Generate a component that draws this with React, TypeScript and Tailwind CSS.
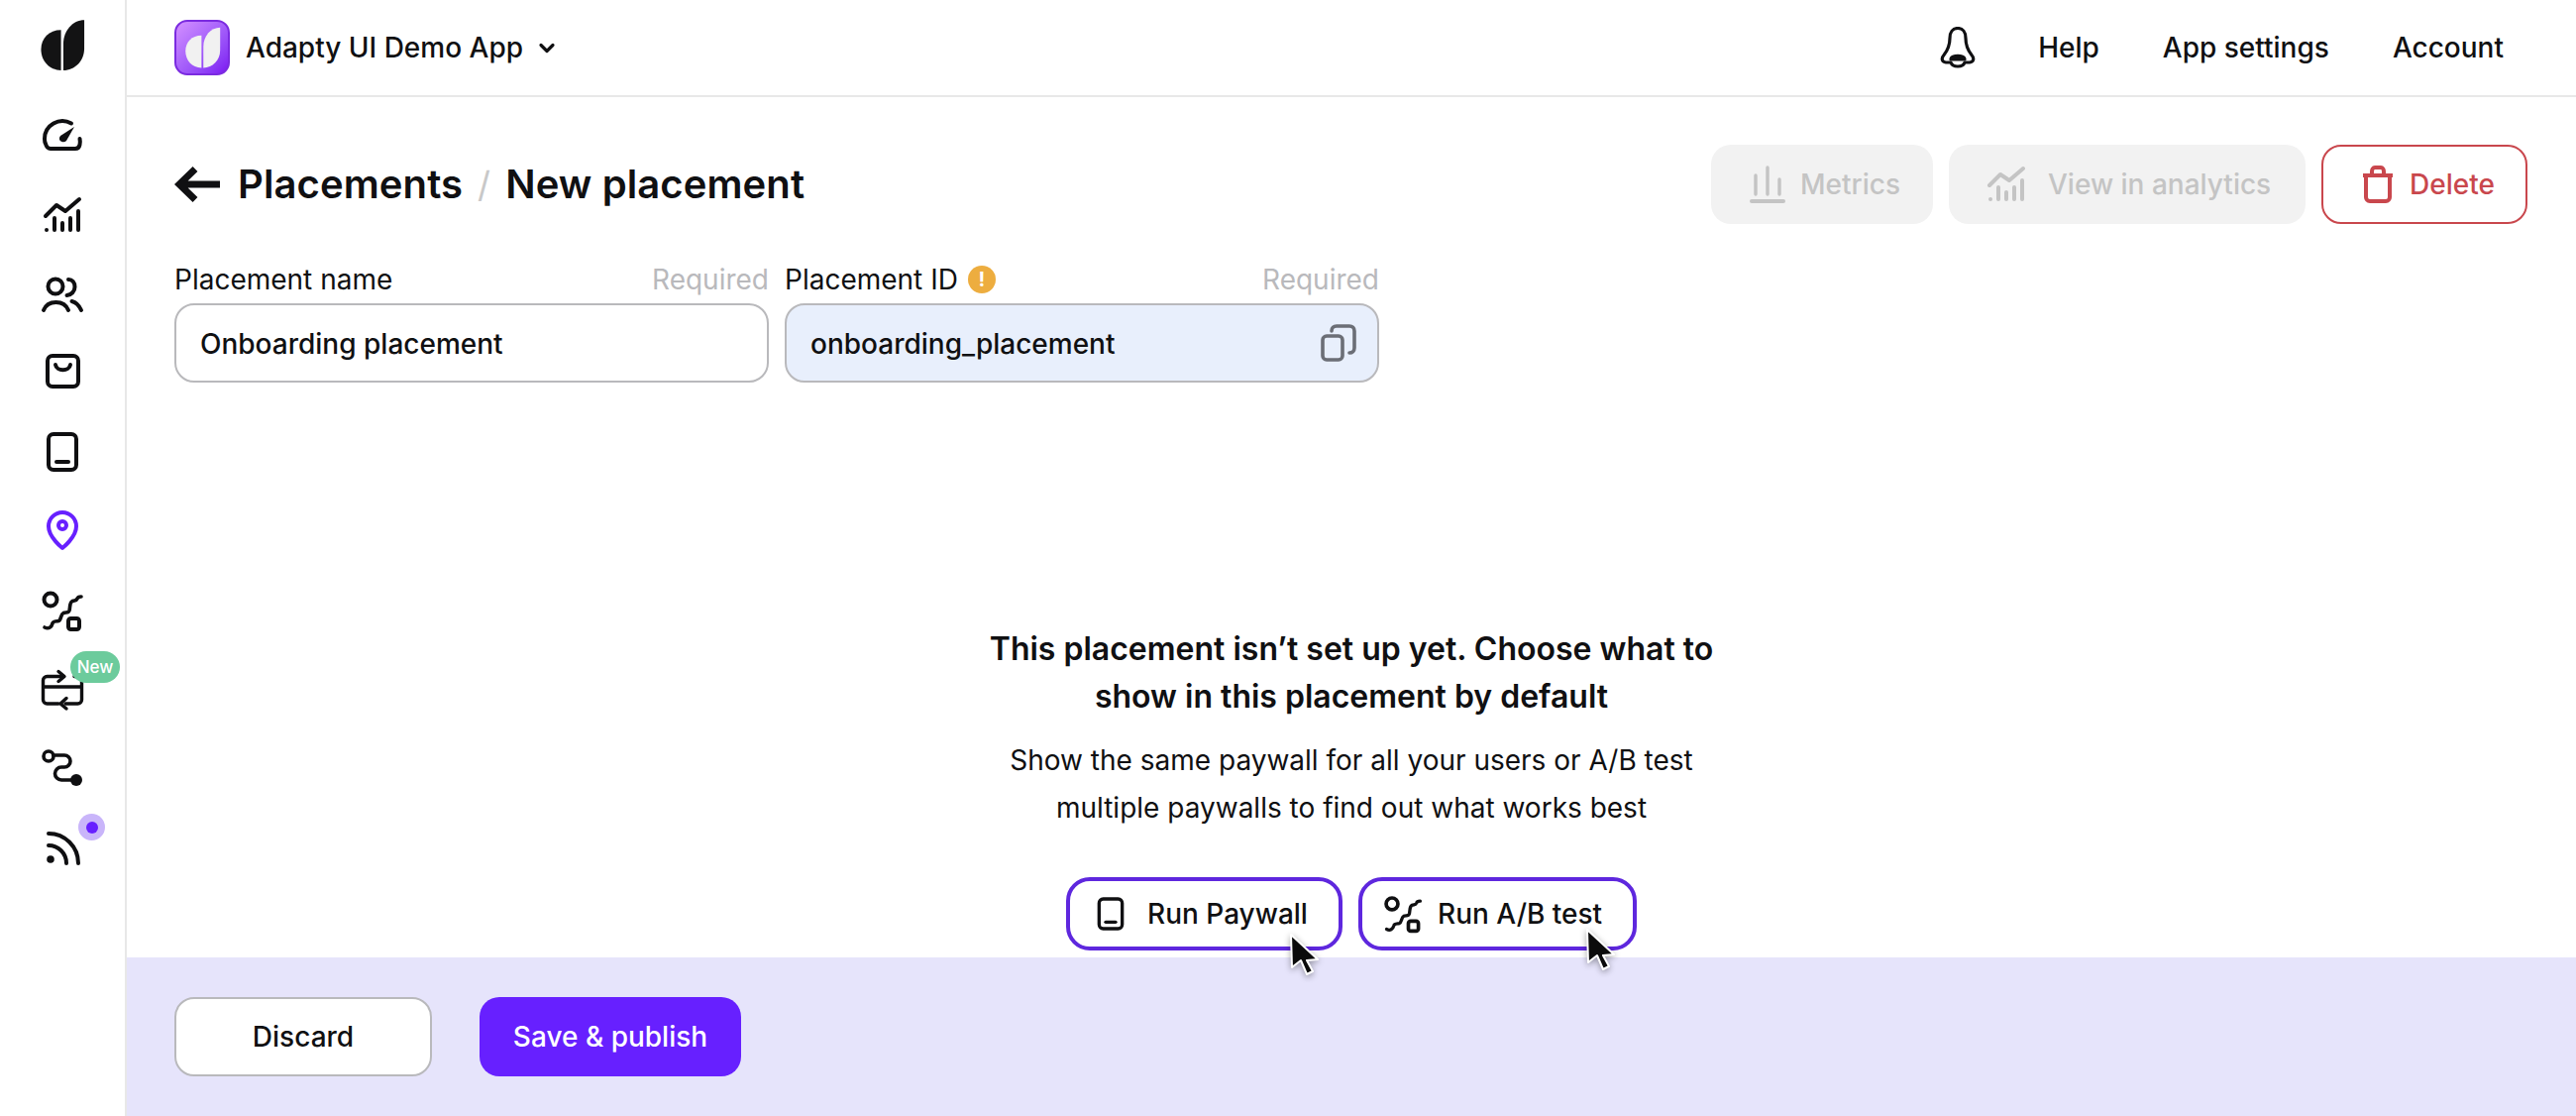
import React from "react";

const Ic = ({ children, className = "w-12 h-12" }: { children: React.ReactNode; className?: string }) => (
  <svg viewBox="0 0 48 48" className={`block ${className}`} fill="none" stroke="currentColor" strokeWidth={4} strokeLinecap="round" strokeLinejoin="round">
    {children}
  </svg>
);

const AB = ({ className = "w-12 h-12" }: { className?: string }) => (
  <Ic className={className}>
    <circle cx="12" cy="13" r="6.5" />
    <rect x="30" y="32" width="11" height="11" rx="2.5" />
    <path d="M6 41C10 43 13 41 14 37C14.500 34.500 18 35 20 34.500C23 33.500 22 28 25 26.500C27.500 25.500 30 27 31 24C32 20 31 16 34 14.500C36.500 13.500 38 14.500 39 12C39.500 10 41 10 43 10" strokeWidth={3.6} />
  </Ic>
);

const Phone = ({ className = "w-12 h-12" }: { className?: string }) => (
  <Ic className={className}>
    <rect x="10" y="6" width="28" height="36" rx="5" />
    <path d="M18 34h12" />
  </Ic>
);

const Chart = ({ className = "w-12 h-12" }: { className?: string }) => (
  <Ic className={className}>
    <path d="M7 25 18 14l9 6L41 8" />
    <path d="M8 39h.01M16 27v12M24 32v7M32 27v12M40 20v19" />
  </Ic>
);

const Cursor = ({ className = "" }: { className?: string }) => (
  <svg viewBox="0 0 36 50" className={`absolute w-9 h-[50px] drop-shadow-[0_2px_3px_rgba(0,0,0,0.35)] ${className}`}>
    <path d="M3 3l1 33 9-7 6 14 6-3-6-11 11-1z" fill="#0b0b0b" stroke="#fff" strokeWidth={2} strokeLinejoin="round" />
  </svg>
);

function Sidebar() {
  return (
    <aside className="w-[128px] shrink-0 h-full border-r-2 border-[#E8E8E8] bg-white flex flex-col items-center text-[#0F0F11] relative">
      <svg viewBox="0 0 48 56" className="w-[46px] h-[54px] mt-[19px] mb-[40px] block" fill="#131314">
        <path d="M22.500 11.500V54C10 54 1.500 44 1.500 32S10 11.500 22.500 11.500z" />
        <path d="M47 1v30c0 13-10 23-22 23V26C25 12 35 1 47 1z" />
      </svg>
      <div className="flex flex-col gap-[31.8px] items-center">
        <Ic>
          <path d="M33 11.500A18 18 0 0 0 6 27c0 2 .3 4 1 5 .8 3 2.500 5 5 5h25c2.500 0 4-1.500 4.500-4 .5-1.500.5-3.500 0-6" />
          <path d="M36 15 28 29a4.500 4.500 0 0 1-7-1 4.500 4.500 0 0 1 1-4z" fill="currentColor" stroke="none" />
        </Ic>
        <Chart />
        <Ic>
          <circle cx="17" cy="16" r="7.500" />
          <path d="M5 40c2-5 6.500-8 12.500-8S28 35 30 40" />
          <path d="M30 9c4 0 6.500 3 6.500 7.500S33 24.500 28.500 25M33.500 31c4 1 7.500 4.500 9.500 9" />
        </Ic>
        <Ic>
          <rect x="9" y="7" width="31" height="31" rx="5" />
          <path d="M17 16c1 7 14 7 15 0" />
        </Ic>
        <Phone />
        <Ic className="w-12 h-12 text-[#6720FF]">
          <path d="M24 41S10 30 10 19a14 14 0 0 1 28 0c0 11-14 22-14 22z" />
          <circle cx="24" cy="18" r="4" />
        </Ic>
        <AB />
        <div className="relative">
          <Ic>
            <path d="M25 10.500H8.500a4 4 0 0 0-4 4V34a4 4 0 0 0 4 4H20M27 38h12.500a4 4 0 0 0 4-4V14.500a4 4 0 0 0-4-4H36M4.500 21h39" strokeWidth={3.4} />
            <path d="M20 5.500l6 5-6 5M28 32.500l-6 5.500 6 5" strokeWidth={3.4} />
          </Ic>
          <span className="absolute left-[32px] top-[-15px] w-[50px] h-8 rounded-full bg-[#6CCB9C] text-white text-[17px] font-medium leading-8 text-center">New</span>
        </div>
        <Ic>
          <circle cx="10" cy="12" r="5" strokeWidth={3.6} />
          <path d="M15 11h11a6 6 0 0 1 0 12h-3a6.500 6.500 0 0 0 0 13h15" strokeWidth={3.6} />
          <circle cx="38" cy="36" r="6" fill="currentColor" stroke="none" />
        </Ic>
        <div className="relative">
          <Ic>
            <path d="M10 22a18 18 0 0 1 18 18M10 10a30 30 0 0 1 30 30" />
            <circle cx="12" cy="36" r="3.800" fill="currentColor" stroke="none" />
          </Ic>
          <span className="absolute left-[40px] top-[-10px] w-[27px] h-[27px] rounded-full bg-[#C9B5FA] flex items-center justify-center">
            <span className="w-3 h-3 rounded-full bg-[#6720FF]" />
          </span>
        </div>
      </div>
    </aside>
  );
}

function TopBar() {
  return (
    <header className="h-[98px] shrink-0 border-b-2 border-[#E8E8E8] pl-12 pr-[73px] flex items-center justify-between text-[28px] font-medium text-[#101012]">
      <div className="flex items-center">
        <span className="w-14 h-14 rounded-[13px] border-2 border-[#7B2BE0] bg-gradient-to-br from-[#D48FFF] to-[#7D0CF2] flex items-center justify-center mr-4">
          <svg viewBox="0 0 48 56" className="w-[37px] h-[43px] block" fill="#F1F1F1">
            <path d="M22.500 11.500V54C10 54 1.500 44 1.500 32S10 11.500 22.500 11.500z" />
            <path d="M47 1v30c0 13-10 23-22 23V26C25 12 35 1 47 1z" />
          </svg>
        </span>
        <span>Adapty UI Demo App</span>
        <svg viewBox="0 0 24 24" className="w-6 h-6 ml-3" fill="none" stroke="currentColor" strokeWidth={3.2} strokeLinecap="round" strokeLinejoin="round">
          <path d="M6 9.500l6 6 6-6" />
        </svg>
      </div>
      <nav className="flex items-center gap-[64px]">
        <svg viewBox="0 0 38 42" className="w-[38px] h-[42px] block mr-[-2px]" fill="none" stroke="currentColor" strokeWidth={3.2} strokeLinejoin="round">
          <path d="M19 1.500c-5 0-8 4-8 10 0 8-2 12-6 17-3 3.500-2 7 2 7.500h5c1 3 4 4 7 4s6-1 7-4h5c4-.5 5-4 2-7.500-4-5-6-9-6-17 0-6-3-10-8-10z" />
          <path d="M12 33c0-5 14-5 14 0z" fill="currentColor" />
        </svg>
        <span>Help</span>
        <span>App settings</span>
        <span>Account</span>
      </nav>
    </header>
  );
}

function Field({ label, warn, value, blue }: { label: string; warn?: boolean; value: string; blue?: boolean }) {
  return (
    <div>
      <div className="h-8 mb-2 flex items-center justify-between text-[28px]">
        <span className="flex items-center gap-[10px] text-[#101012]">
          {label}
          {warn && (
            <span className="w-7 h-7 rounded-full bg-[#EDAD3F] text-white text-[20px] font-bold leading-7 text-center">!</span>
          )}
        </span>
        <span className="text-[#B9B9BC]">Required</span>
      </div>
      <div className={`h-20 rounded-[20px] border-2 border-[#B9B9BC] pl-6 pr-[21px] flex items-center justify-between text-[28px] font-medium text-[#101012] ${blue ? "bg-[#E8EFFC]" : "bg-white"}`}>
        <span className="pt-[2px]">{value}</span>
        {blue && (
          <svg viewBox="0 0 36 38" className="w-9 h-[38px] block" fill="none" stroke="#6B6E76" strokeWidth={3.6} strokeLinecap="round" strokeLinejoin="round">
            <rect x="2" y="12" width="20" height="24" rx="4" />
            <path d="M11 7c0-3 2-5 5-5h13c3 0 5 2 5 5v17c0 3-2 5-5 5" />
          </svg>
        )}
      </div>
    </div>
  );
}

function ActionButton({ icon, label, className }: { icon: React.ReactNode; label: string; className: string }) {
  return (
    <button className={`h-20 rounded-[20px] bg-[#F2F2F2] text-[#C4C4C4] text-[28px] font-medium flex items-center ${className}`}>
      {icon}
      {label}
    </button>
  );
}

export default function App() {
  return (
    <div className="w-[2600px] h-[1126px] overflow-hidden flex bg-white font-['Inter',sans-serif]">
      <Sidebar />
      <main className="flex-1 min-w-0 h-full flex flex-col">
        <TopBar />
        <section className="flex-1 min-h-0 pt-[48px] pl-12 pr-[49px] relative">
          <div className="flex items-center justify-between">
            <h1 className="flex items-center text-[40px] font-semibold text-[#101012] tracking-[0.1px]">
              <svg viewBox="0 0 46 38" className="w-[46px] h-[38px] block mr-[18px]" fill="none" stroke="currentColor" strokeWidth={7}>
                <path d="M21 3.500 5 19l16 15.500M5 19h41" />
              </svg>
              <span>Placements</span>
              <span className="mx-[15px] font-normal text-[36px] text-[#C8C8C8]">/</span>
              <span>New placement</span>
            </h1>
            <div className="flex gap-4">
              <ActionButton
                className="w-[224px] pl-[39px] gap-[15px]"
                label="Metrics"
                icon={
                  <svg viewBox="0 0 36 38" className="w-9 h-[38px] block" fill="none" stroke="currentColor" strokeWidth={3.4} strokeLinecap="round">
                    <path d="M6 10v19M18 2v27M30 14v15" />
                    <path d="M2 36h32" strokeWidth={4} />
                  </svg>
                }
              />
              <ActionButton className="w-[360px] pl-[34px] gap-[18px]" label="View in analytics" icon={<Chart />} />
              <button className="w-[208px] h-20 rounded-[20px] border-2 border-[#C9474D] text-[#C9474D] text-[28px] font-medium flex items-center pl-[38px] gap-[15px]">
                <svg viewBox="0 0 34 38" className="w-[34px] h-[38px] block" fill="none" stroke="currentColor" strokeWidth={4} strokeLinejoin="round">
                  <path d="M2 10h30M11 9V6c0-2 1-4 3-4h6c2 0 3 2 3 4v3M5 11v21c0 2 1.500 4 4 4h16c2.500 0 4-2 4-4V11" />
                </svg>
                Delete
              </button>
            </div>
          </div>
          <div className="grid grid-cols-[600px_600px] gap-4 mt-10">
            <Field label="Placement name" value="Onboarding placement" />
            <Field label="Placement ID" warn value="onboarding_placement" blue />
          </div>
          <div className="absolute left-0 right-0 top-[533px] flex flex-col items-center text-center text-[#101012]">
            <h2 className="text-[32px] leading-[48px] font-semibold w-[760px]">
              This placement isn’t set up yet. Choose what to show in this placement by default
            </h2>
            <p className="text-[28px] leading-[48px] mt-4 w-[760px]">
              Show the same paywall for all your users or A/B test multiple paywalls to find out what works best
            </p>
            <div className="flex gap-4 mt-[46px]">
              <button className="w-[279px] h-[74px] rounded-[24px] border-4 border-[#5E27DE] bg-white text-[28px] font-medium flex items-center pl-[21px] gap-[17px]">
                <Phone className="w-10 h-10" />
                Run Paywall
              </button>
              <button className="w-[281px] h-[74px] rounded-[24px] border-4 border-[#5E27DE] bg-white text-[28px] font-medium flex items-center pl-[19px] gap-[13px]">
                <AB className="w-11 h-11" />
                Run A/B test
              </button>
            </div>
          </div>
        </section>
        <footer className="h-[160px] shrink-0 bg-[#E6E4FB] pl-12 pt-10 flex gap-12 relative">
          <button className="w-[260px] h-20 rounded-[20px] border-2 border-[#B9B9BC] bg-white text-[28px] font-medium text-[#101012]">Discard</button>
          <button className="w-[264px] h-20 rounded-[20px] bg-[#6720FF] text-[28px] font-medium text-white">Save &amp; publish</button>
          <Cursor className="left-[1172px] top-[-26px]" />
          <Cursor className="left-[1471px] top-[-31px]" />
        </footer>
      </main>
    </div>
  );
}
